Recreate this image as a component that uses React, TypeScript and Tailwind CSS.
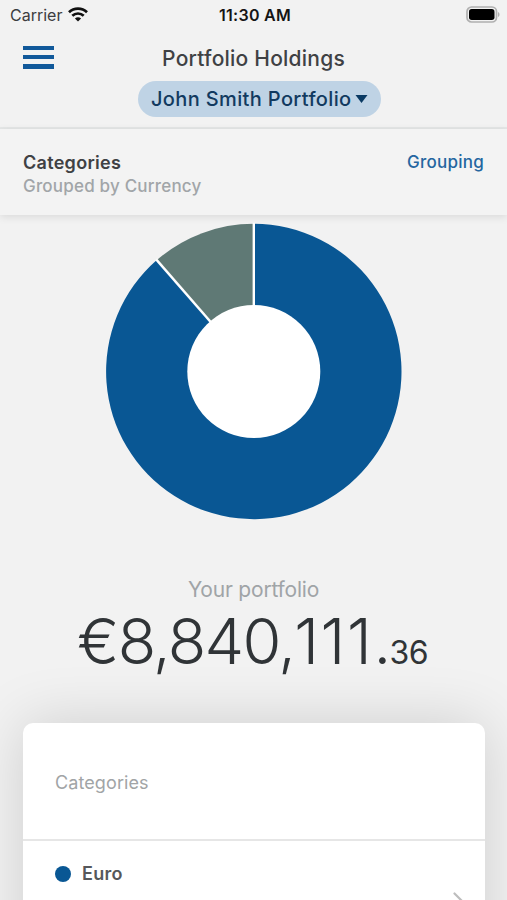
import React from 'react';

interface Slice {
    label: string;
    share: number;
    color: string;
}

const slices: Slice[] = [
    { label: 'Euro', share: 0.886, color: '#095794' },
    { label: 'Other', share: 0.114, color: '#5f7975' },
];

const CX = 153.8;
const CY = 150.5;
const OUTER = 147.7;
const INNER = 66.5;

const pointAt = (share: number, radius: number) => {
    const angle = share * Math.PI * 2;
    return [CX + radius * Math.sin(angle), CY - radius * Math.cos(angle)];
};

const slicePath = (from: number, to: number) => {
    const [x1, y1] = pointAt(from, OUTER);
    const [x2, y2] = pointAt(to, OUTER);
    const large = to - from > 0.5 ? 1 : 0;
    return `M${CX} ${CY}L${x1} ${y1}A${OUTER} ${OUTER} 0 ${large} 1 ${x2} ${y2}Z`;
};

const StatusBar: React.FC = () => (
    <div className="grid h-[30px] grid-cols-3 items-center pl-[10px] pr-[7px]">
        <div className="flex items-center gap-[6px]">
            <span className="text-[16px] leading-5 text-[#3c3d3f]">Carrier</span>
            <svg className="-mt-[2px]" width="20" height="15" viewBox="0 0 20 15" fill="none" stroke="#111" strokeWidth="2.7">
                <path d="M1 5.2C6 .4 14 .4 19 5.2" />
                <path d="M4.3 8.8C7.5 5.7 12.500 5.7 15.700 8.8" />
                <path d="M10 14.500L6.900 11.400C8.600 9.800 11.400 9.800 13.100 11.400Z" fill="#111" stroke="none" />
            </svg>
        </div>
        <span className="text-center text-[16px] leading-5 font-semibold tracking-[0.3px] whitespace-nowrap text-[#151515]">11:30 AM</span>
        <svg className="-mt-[2px] justify-self-end" width="34" height="17" viewBox="0 0 34 17">
            <rect x="1" y="1" width="29.500" height="15" rx="4.500" fill="none" stroke="#b0b0b0" strokeWidth="1.700" />
            <rect x="3" y="3" width="25.500" height="11" rx="2.700" fill="#000" />
            <path d="M32 6c2 .8 2 4.200 0 5Z" fill="#b0b0b0" />
        </svg>
    </div>
);

const DonutChart: React.FC = () => {
    let start = 0;
    const arcs = slices.map((slice) => {
        const from = start;
        start += slice.share;
        return { ...slice, from, to: start };
    });

    return (
        <svg className="mx-auto mt-[6px] block shrink-0" width="307" height="301" viewBox="0 0 307 301">
            {arcs.map((arc) => (
                <path key={arc.label} d={slicePath(arc.from, arc.to)} fill={arc.color} />
            ))}
            {arcs.map((arc) => {
                const [x, y] = pointAt(arc.from, OUTER + 1);
                return <line key={arc.label} x1={CX} y1={CY} x2={x} y2={y} stroke="#fff" strokeWidth="2.4" />;
            })}
            <circle cx={CX} cy={CY} r={INNER} fill="#fff" />
        </svg>
    );
};

export default function App() {
    return (
        <div className="flex h-[900px] w-[507px] flex-col overflow-hidden bg-[#f2f2f2] font-['Inter',sans-serif]">
            {/* Header */}
            <header className="h-[129px] shrink-0 border-b-2 border-[#e5e7e7]">
                <StatusBar />
                <div className="grid h-[51px] grid-cols-[1fr_auto_1fr] items-start px-[23px] pt-[15px]">
                    <button className="flex w-[31px] flex-col gap-[5px] pt-px" aria-label="Menu">
                        <span className="h-[4px] w-full bg-[#11599a]" />
                        <span className="h-[4px] w-full bg-[#11599a]" />
                        <span className="h-[5px] w-full bg-[#11599a]" />
                    </button>
                    <h1 className="pt-px text-[21px] leading-[26px] font-medium tracking-[0.22px] whitespace-nowrap text-[#3f4144]">Portfolio Holdings</h1>
                </div>
                <button className="ml-[138px] flex h-[36px] w-[243px] items-center rounded-full bg-[#bfd3e5] pl-[13px]">
                    <span className="text-[20px] leading-6 font-medium tracking-[0.36px] whitespace-nowrap text-[#123a60]">John Smith Portfolio</span>
                    <svg className="ml-[3px] shrink-0" width="13" height="8" viewBox="0 0 13 8" fill="#0a3a63">
                        <path d="M.5 0h12L6.500 8Z" />
                    </svg>
                </button>
            </header>

            {/* Grouping bar */}
            <section className="flex h-[86px] shrink-0 items-start justify-between bg-[#f3f3f3] px-[23px] pt-[21px] shadow-[0_2px_8px_rgba(0,0,0,0.1)]">
                <div>
                    <h2 className="pt-px text-[18px] leading-[23px] font-semibold tracking-[0.3px] text-[#3f4144]">Categories</h2>
                    <p className="text-[17px] leading-6 font-medium tracking-[0.2px] text-[#a1a5a8]">Grouped by Currency</p>
                </div>
                <button className="text-[17px] leading-6 font-medium tracking-[0.25px] text-[#2466a0]">Grouping</button>
            </section>

            <DonutChart />

            {/* Total */}
            <section className="h-[201px] shrink-0 pt-[54px] text-center">
                <p className="text-[21px] leading-7 tracking-[-0.2px] text-[#a0a4a7]">Your portfolio</p>
                <p className="flex items-baseline pl-[77px] whitespace-nowrap text-[#303437]">
                    <span className="text-[63px] leading-[74px] font-light tracking-[-1.7px]">
                        €8,840,<span className="tracking-[1.6px]">111</span>.
                    </span>
                    <span className="text-[32px] tracking-[-0.6px]">36</span>
                </p>
            </section>

            <section className="mx-[23px] mr-[22px] h-[300px] shrink-0 rounded-t-[10px] bg-white shadow-[0_0_60px_rgba(0,0,0,0.15)]">
                <div className="flex h-[118px] items-center border-b-2 border-[#e6e6e6] pt-[4px] pl-[32px]">
                    <span className="text-[18px] leading-6 tracking-[0.1px] text-[#a1a4a6]">Categories</span>
                </div>
                <div className="flex pl-[32px] pr-[20px] pt-[21px]">
                    <div className="flex h-6 items-center gap-[11px]">
                        <span className="size-4 rounded-full bg-[#095794]" />
                        <span className="text-[18px] leading-6 font-semibold tracking-[0.3px] text-[#56585b]">Euro</span>
                    </div>
                    <svg className="mt-[30px] ml-auto" width="12" height="20" viewBox="0 0 12 20" fill="none" stroke="#bdbdbd" strokeWidth="2.2" strokeLinecap="round" strokeLinejoin="round">
                        <path d="M1.500 1.500L10 10L1.500 18.500" />
                    </svg>
                </div>
            </section>
        </div>
    );
}
